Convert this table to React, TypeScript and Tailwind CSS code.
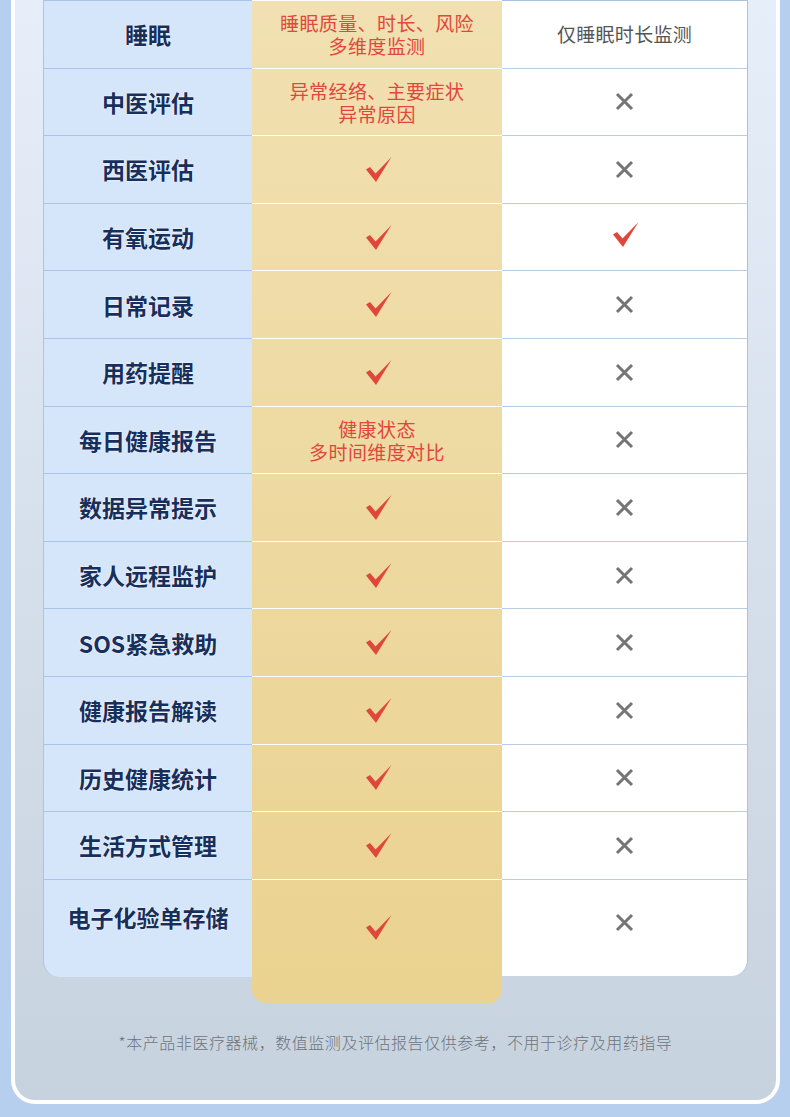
import React from "react";

type Val = { kind: "check" } | { kind: "x" } | { kind: "text"; lines: string[] };

const rows: { name: string; mid: Val; right: Val }[] = [
  { name: "睡眠", mid: { kind: "text", lines: ["睡眠质量、时长、风险", "多维度监测"] }, right: { kind: "text", lines: ["仅睡眠时长监测"] } },
  { name: "中医评估", mid: { kind: "text", lines: ["异常经络、主要症状", "异常原因"] }, right: { kind: "x" } },
  { name: "西医评估", mid: { kind: "check" }, right: { kind: "x" } },
  { name: "有氧运动", mid: { kind: "check" }, right: { kind: "check" } },
  { name: "日常记录", mid: { kind: "check" }, right: { kind: "x" } },
  { name: "用药提醒", mid: { kind: "check" }, right: { kind: "x" } },
  { name: "每日健康报告", mid: { kind: "text", lines: ["健康状态", "多时间维度对比"] }, right: { kind: "x" } },
  { name: "数据异常提示", mid: { kind: "check" }, right: { kind: "x" } },
  { name: "家人远程监护", mid: { kind: "check" }, right: { kind: "x" } },
  { name: "SOS紧急救助", mid: { kind: "check" }, right: { kind: "x" } },
  { name: "健康报告解读", mid: { kind: "check" }, right: { kind: "x" } },
  { name: "历史健康统计", mid: { kind: "check" }, right: { kind: "x" } },
  { name: "生活方式管理", mid: { kind: "check" }, right: { kind: "x" } },
];

const font = { fontFamily: '"Noto Sans CJK SC", "Noto Sans", sans-serif' };

function Check() {
  return (
    <svg width="26" height="25" viewBox="0 0 26 25">
      <polygon points="0,12.5 4,10 9.5,16.5 25.5,0 10,25" fill="#e0473b" />
    </svg>
  );
}

function XMark() {
  return (
    <svg width="19" height="19" viewBox="0 0 19 19">
      <path d="M2 2 L17 17 M17 2 L2 17" stroke="#757575" strokeWidth="3" strokeLinecap="butt" />
    </svg>
  );
}

function MidContent({ v }: { v: Val }) {
  if (v.kind === "check") return <div className="ml-[3px]"><Check /></div>;
  if (v.kind === "x") return <XMark />;
  return (
    <div className="text-center text-[19px] tracking-[0.4px] leading-[23px] text-[#e1473a]">
      {v.lines.map((l) => (
        <div key={l}>{l}</div>
      ))}
    </div>
  );
}

function RightContent({ v }: { v: Val }) {
  if (v.kind === "check") return <div className="-mt-[6px] ml-[2px]"><Check /></div>;
  if (v.kind === "x") return <XMark />;
  return <div className="text-center text-[19px] tracking-[0.3px] leading-[24px] text-[#555555]">{v.lines[0]}</div>;
}

export default function App() {
  return (
    <div className="w-[790px] h-[1117px] bg-[#b7cfef] overflow-hidden" style={font}>
      <div className="ml-[11px] w-[769px] h-[1104px] border-x-4 border-b-4 border-white rounded-b-[24px] bg-gradient-to-b from-[#e6eef9] to-[#c6d2de] flex flex-col">
        <div className="flex items-start pl-[28px]">
          {/* left column */}
          <div className="w-[209px] bg-[#d5e5fa] border-l border-t border-[#a8c4e6] rounded-bl-[16px] flex flex-col">
            {rows.map((r) => (
              <div
                key={r.name}
                className="h-[67.6px] border-b border-[#a8c4e6] flex items-center justify-center text-[23px] font-bold text-[#162f5c] leading-[32px]"
                style={{ textShadow: "0 0 2px #ffffff, 0 0 1px #ffffff" }}
              >
                {r.name}
              </div>
            ))}
            <div
              className="h-[97px] flex justify-center pt-[21px] text-[23px] font-bold text-[#162f5c] leading-[32px]"
              style={{ textShadow: "0 0 2px #ffffff, 0 0 1px #ffffff" }}
            >
              电子化验单存储
            </div>
          </div>
          {/* middle column */}
          <div className="w-[250px] h-[1003px] bg-gradient-to-b from-[#f1e0b1] to-[#ead290] border-t border-white rounded-b-[14px] flex flex-col">
            {rows.map((r) => (
              <div key={r.name} className="h-[67.6px] border-b border-white flex items-center justify-center">
                <MidContent v={r.mid} />
              </div>
            ))}
            <div className="flex justify-center pt-[35px] pl-[3px]">
              <Check />
            </div>
          </div>
          {/* right column */}
          <div className="w-[246px] bg-white border-r border-t border-[#a9c3dc] rounded-br-[16px] flex flex-col">
            {rows.map((r) => (
              <div key={r.name} className="h-[67.6px] border-b border-[#b8cfe0] flex items-center justify-center">
                <RightContent v={r.right} />
              </div>
            ))}
            <div className="h-[96px] flex justify-center pt-[33px]">
              <XMark />
            </div>
          </div>
        </div>
        <div className="mt-[27px] text-center text-[16px] tracking-[0.55px] leading-[24px] text-[#6f747b] font-light">
          *本产品非医疗器械，数值监测及评估报告仅供参考，不用于诊疗及用药指导
        </div>
      </div>
    </div>
  );
}
